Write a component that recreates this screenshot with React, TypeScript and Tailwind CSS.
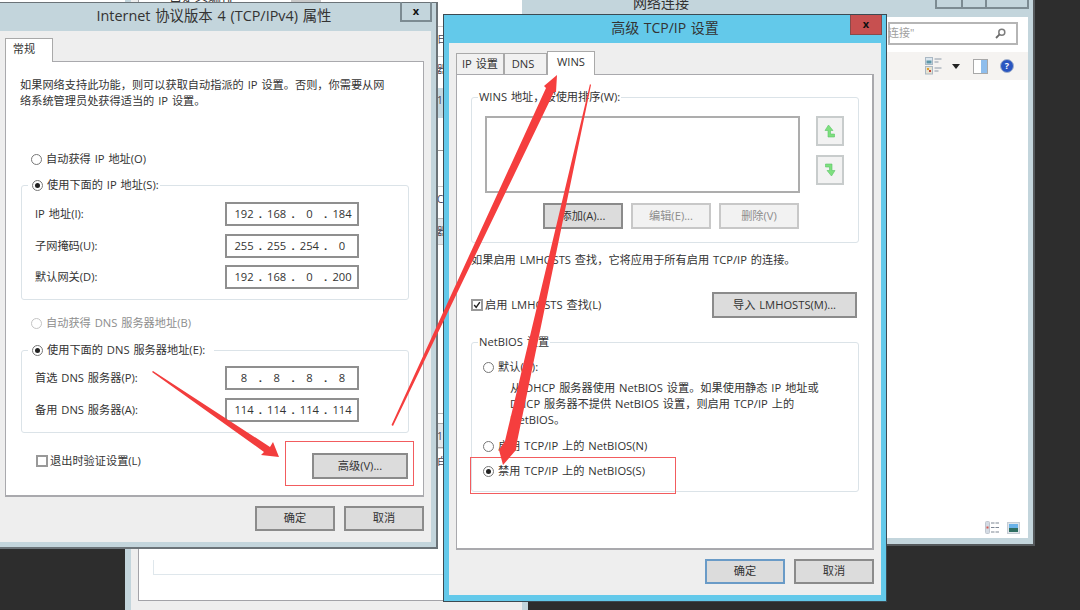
import type { ReactNode } from 'react'

const font = 'font-["Open_Sans","Noto_Sans_CJK_SC",sans-serif]'

// what shows of the list behind, in the gap between the two dialogs
const backRows = [
  { h: 'h-[26px]', bg: 'bg-white', text: '' },
  { h: 'h-[30px]', bg: 'bg-white border-t border-[#ccc]', text: '日' },
  { h: 'h-[32px]', bg: 'bg-white border-t border-[#ccc]', text: '器' },
  { h: 'h-[30px]', bg: 'bg-[#c4d8e0]', text: '1' },
  { h: 'h-[32px]', bg: 'bg-white', text: '' },
  { h: 'h-[36px]', bg: 'bg-white border-t border-[#999]', text: '' },
  { h: 'h-[32px]', bg: 'bg-white border-t border-[#ccc]', text: 'C' },
  { h: 'h-[26px]', bg: 'bg-[#dfe6ea] border-t border-[#bbb]', text: '器' },
  { h: 'h-[169px]', bg: 'bg-white border-t border-[#ccc]', text: '' },
  { h: 'h-[10px]', bg: 'bg-white border-t border-[#bbb]', text: '' },
  { h: 'h-[25px]', bg: 'bg-[#e3e7ea] border-y border-[#aaa]', text: '1' },
  { h: 'h-[40px]', bg: 'bg-white border-t border-[#ddd]', text: '白' },
]

function Btn({ w, h = 'h-[26px]', cls = 'bg-[#dcdcdc] border-[#8b8b8b] text-[#333]', children }: { w: string; h?: string; cls?: string; children: ReactNode }) {
  return <div className={`${w} ${h} ${cls} border-2 flex items-center justify-center shrink-0`}>{children}</div>
}

function Radio({ on, off, children }: { on?: boolean; off?: boolean; children: ReactNode }) {
  return (
    <div className={`flex items-center h-[16px] ${off ? 'text-[#8d8d8d]' : ''}`}>
      <div className={`w-[11px] h-[11px] rounded-full border bg-white mr-[4px] flex items-center justify-center shrink-0 ${off ? 'border-[#c4c4c4]' : 'border-[#777]'}`}>
        {on && <div className="w-[5px] h-[5px] rounded-full bg-[#222]" />}
      </div>
      <span className="whitespace-nowrap">{children}</span>
    </div>
  )
}

function Check({ on, children }: { on?: boolean; children: ReactNode }) {
  return (
    <div className="flex items-center h-[16px]">
      <div className="w-[12px] h-[12px] border-2 border-[#999] bg-white mr-[2px] flex items-center justify-center shrink-0">
        {on && (
          <svg width="10" height="10" viewBox="0 0 10 10">
            <path d="M1.5 5 L4 8 L8.5 1.5" fill="none" stroke="#222" strokeWidth="1.8" />
          </svg>
        )}
      </div>
      <span className="whitespace-nowrap">{children}</span>
    </div>
  )
}

function Group({ legend, cls, children }: { legend: ReactNode; cls: string; children: ReactNode }) {
  return (
    <div className={`relative border border-[#dbe3e8] rounded-[3px] ${cls}`}>
      <div className="absolute left-[6px] -top-[9px] bg-white px-[1px]">{legend}</div>
      {children}
    </div>
  )
}

function IpField({ label, parts }: { label: string; parts: string[] }) {
  return (
    <div className="flex items-center justify-between pl-[13px] pr-[49px] h-[24px]">
      <span className="whitespace-nowrap">{label}</span>
      <div className="w-[134px] h-[24px] border-2 border-[#8f8f8f] bg-white flex items-center pl-[5px]">
        {parts.map((p, i) => (
          <div key={i} className="flex items-center">
            <span className="w-[24px] text-center">{p}</span>
            {i < 3 && <span className="w-[8.7px] text-center font-bold">.</span>}
          </div>
        ))}
      </div>
    </div>
  )
}

function Tab({ active, w, children }: { active?: boolean; w: string; children: ReactNode }) {
  return (
    <div className={`${w} border border-[#a9a9a9] border-b-0 flex justify-center ${active ? 'h-[24px] bg-white pt-[2px] relative z-10 -mb-[1px]' : 'h-[21px] bg-[#f1f1f1] pt-[2px]'}`}>
      {children}
    </div>
  )
}

function UpDown({ down }: { down?: boolean }) {
  return (
    <div className="w-[28px] h-[30px] border-2 border-[#c8cccc] bg-[#f2f2f2] flex items-center justify-center">
      <svg width="12" height="14" viewBox="0 0 12 14" className={down ? '-scale-100' : ''}>
        <path d="M4.5 1 L9 6.5 L6.5 6.5 L6.5 10 L10.5 10 L10.5 13 L4 13 L4 6.5 L1 6.5 Z" fill="#7ee07e" stroke="#5dc46a" strokeWidth="0.6" />
      </svg>
    </div>
  )
}

function BackWindow() {
  return (
    <div className="absolute left-[125px] top-0 w-[403px] h-[610px] bg-[#c3d5dc] px-[6px]">
      <div className="h-full bg-[#eee] pl-[7px]">
        <div className="relative h-[601px] bg-white border-l border-b border-[#a3a3a8] overflow-hidden">
          <div className="absolute left-[30px] -top-[11px] text-[13px] leading-[14px] text-[#333] whitespace-nowrap">自定义编排</div>
          <div className="absolute left-[152px] top-0 w-[30px] h-[2px] bg-[#c9c9c9]" />
          <div className="absolute left-[14px] top-[560px] w-[380px] h-[15px] border-l border-b border-[#dfe7ec]" />
          <div className="absolute left-[298px] top-0 w-[6px] flex flex-col overflow-hidden text-[10px] leading-[24px] text-[#445]">
            {backRows.map((r, i) => (
              <div key={i} className={`${r.h} ${r.bg} overflow-hidden whitespace-nowrap`}>{r.text}</div>
            ))}
          </div>
        </div>
      </div>
    </div>
  )
}

function NetworkWindow() {
  return (
    <div className="absolute left-[289px] -top-[11px] w-[746px] h-[557px] bg-[#c3d5dc] border-r-2 border-b-2 border-[#55595c] flex flex-col text-[#333]">
      <div className="h-[28px] pb-[2px] flex items-center justify-center text-[14px]">网络连接</div>
      <div className="absolute right-[4px] top-0 w-[94px] h-[20px] flex border-2 border-t-0 border-[#7c8b92]">
        <div className="w-[26px] border-r-2 border-[#7c8b92]" />
        <div className="w-[24px] border-r-2 border-[#7c8b92]" />
        <div className="flex-1" />
      </div>
      <div className="flex-1 mr-[5px] mb-[6px] bg-white flex flex-col items-end">
        <div className="h-[35px] flex items-start pt-[5px] justify-end pr-[10px] w-full">
          <div className="w-[130px] h-[23px] border-2 border-[#b5b5b5] flex items-center justify-between pr-[10px] text-[11px] text-[#a0a0a0]">
            <span className="whitespace-nowrap -ml-[2px]">连接"</span>
            <svg width="11" height="11" viewBox="0 0 11 11">
              <circle cx="6.8" cy="4.2" r="3" fill="none" stroke="#7d7d7d" strokeWidth="1.5" />
              <path d="M4.6 6.4 L1 10" stroke="#6a6a6a" strokeWidth="1.8" />
            </svg>
          </div>
        </div>
        <div className="w-[141px] h-[28px] bg-[#f5f3f1] flex items-center pl-[38px]">
          <svg width="17" height="18" viewBox="0 0 17 18">
            <rect x="0.5" y="0.5" width="7" height="7" fill="#dbe6ee" stroke="#aab8c4" />
            <rect x="1.5" y="3.5" width="5" height="3" fill="#5f96a8" />
            <rect x="0.5" y="9.5" width="7" height="7.5" fill="#e6e2d0" stroke="#aab8c4" />
            <rect x="2" y="11" width="2" height="2" fill="#e0a030" />
            <rect x="4" y="13" width="2" height="2" fill="#c0483c" />
            <path d="M9.5 2h7M9.5 5h4M9.5 11h7M9.5 14h4" stroke="#8d9aa8" strokeWidth="1" />
          </svg>
          <svg width="8" height="5" viewBox="0 0 8 5" className="ml-[10px]">
            <path d="M0 0H8L4 5Z" fill="#222" />
          </svg>
          <div className="ml-[13px] w-[15px] h-[15px] border border-[#a8a8a8] bg-white flex justify-end">
            <div className="w-[6px] bg-[#8ebdec]" />
          </div>
          <div className="ml-[12px] w-[14px] h-[14px] rounded-full bg-[#2a56c0] border border-[#a6b4cc] text-white text-[9px] leading-[12px] font-bold text-center">?</div>
        </div>
        <div className="flex-1" />
        <div className="flex items-center pr-[8px] pb-[4px] gap-[7px]">
          <svg width="15" height="13" viewBox="0 0 15 13">
            <rect x="0.500" y="0.500" width="4" height="12" rx="1" fill="#d4dbe4" stroke="#c0c6cf" />
            <path d="M6 2h8M6 6.500h8M6 11h8" stroke="#7e8794" strokeWidth="1.200" strokeDasharray="3.500 1" />
            <rect x="1.500" y="5.500" width="2" height="2" fill="#d6554d" />
          </svg>
          <svg width="13" height="12" viewBox="0 0 13 12">
            <rect x="0.500" y="0.500" width="12" height="11" fill="#dfe5ea" stroke="#c4ccd4" />
            <rect x="2" y="2" width="9" height="4" fill="#69b2e8" />
            <rect x="2" y="6" width="9" height="4" fill="#2f6f62" />
          </svg>
        </div>
      </div>
    </div>
  )
}

function Ipv4Dialog() {
  return (
    <div className="absolute left-0 top-[2px] w-[438px] h-[547px] bg-[#c3d5dc] border-t border-r-2 border-b-2 border-[#6b7378] flex flex-col text-[11.2px] [word-spacing:1px] text-[#333]">
      <div className="h-[28px] pb-[2px] pr-[8px] flex items-center justify-center text-[14.4px]">Internet 协议版本 4 (TCP/IPv4) 属性</div>
      <div className="absolute right-[4px] -top-[1px] w-[32px] h-[20px] border-2 border-t-0 border-[#7c8b92] flex items-center justify-center text-[11px] font-bold text-[#111]">x</div>
      <div className="flex-1 mr-[5px] mb-[5px] bg-[#eee] pl-[5px] pr-[7px] pt-[8px] flex flex-col">
        <div className="flex h-[22px] items-end">
          <Tab active w="w-[48px]"><span className="-ml-[10px]">常规</span></Tab>
        </div>
        <div className="h-[436px] bg-white border border-b-2 border-[#a9a9ad] pt-[15px] leading-[16px]">
          <div className="pl-[14px] whitespace-nowrap">
            如果网络支持此功能，则可以获取自动指派的 IP 设置。否则，你需要从网
            <br />
            络系统管理员处获得适当的 IP 设置。
          </div>
          <div className="mt-[42px] ml-[25px]"><Radio>自动获得 IP 地址(O)</Radio></div>
          <Group cls="mt-[18px] ml-[15px] w-[388px] h-[115px] pt-[16px] flex flex-col gap-[7.5px]" legend={<div className="pl-[3px]"><Radio on>使用下面的 IP 地址(S):</Radio></div>}>
            <IpField label="IP 地址(I):" parts={['192', '168', '0', '184']} />
            <IpField label="子网掩码(U):" parts={['255', '255', '254', '0']} />
            <IpField label="默认网关(D):" parts={['192', '168', '0', '200']} />
          </Group>
          <div className="mt-[15px] ml-[25px]"><Radio off>自动获得 DNS 服务器地址(B)</Radio></div>
          <Group cls="mt-[19px] ml-[15px] w-[388px] h-[83px] pt-[15px] flex flex-col gap-[8px]" legend={<div className="pl-[3px] pr-[8px]"><Radio on>使用下面的 DNS 服务器地址(E):</Radio></div>}>
            <IpField label="首选 DNS 服务器(P):" parts={['8', '8', '8', '8']} />
            <IpField label="备用 DNS 服务器(A):" parts={['114', '114', '114', '114']} />
          </Group>
          <div className="mt-[20px] pl-[30px] pr-[15px] flex justify-between items-start">
            <Check>退出时验证设置(L)</Check>
            <Btn w="w-[96px]">高级(V)...</Btn>
          </div>
        </div>
        <div className="flex-1 flex justify-end items-start gap-[9px] pt-[9px]">
          <Btn w="w-[80px]" h="h-[25px]">确定</Btn>
          <Btn w="w-[80px]" h="h-[25px]">取消</Btn>
        </div>
      </div>
    </div>
  )
}

function TcpIpDialog() {
  return (
    <div className="absolute left-[443px] top-[14px] w-[444px] h-[588px] bg-[#63c9ea] border border-[#3c4a52] flex flex-col text-[11.2px] [word-spacing:1px] text-[#333]">
      <div className="h-[28px] pb-[3px] flex items-center justify-center text-[14px]">高级 TCP/IP 设置</div>
      <div className="absolute right-[4px] top-0 w-[32px] h-[20px] bg-[#c75050] border border-t-0 border-[#8a4a4a] flex items-center justify-center text-[11px] font-bold text-[#111]">x</div>
      <div className="flex-1 mx-[5px] mb-[6px] bg-[#eee] px-[7px] pt-[8px] flex flex-col">
        <div className="flex items-end h-[23px]">
          <Tab w="w-[48px]">IP 设置</Tab>
          <Tab w="w-[43px]"><span className="-ml-[5px]">DNS</span></Tab>
          <Tab active w="w-[48px]">WINS</Tab>
        </div>
        <div className="h-[476px] bg-white border border-r-2 border-b-2 border-[#a9a9ad] leading-[16px]">
          <Group cls="mt-[22px] ml-[14px] w-[388px] h-[146px] pt-[18px] pl-[13px]" legend="WINS 地址，按使用排序(W):">
            <div className="flex gap-[16px]">
              <div className="w-[315px] h-[77px] border-2 border-[#adadad] bg-white" />
              <div className="flex flex-col gap-[9px]">
                <UpDown />
                <UpDown down />
              </div>
            </div>
            <div className="mt-[10px] pl-[58px] flex gap-[8px]">
              <Btn w="w-[80px]">添加(A)...</Btn>
              <Btn w="w-[80px]" cls="bg-[#f2f2f2] border-[#c8c8c8] text-[#8d8d8d]">编辑(E)...</Btn>
              <Btn w="w-[80px]" cls="bg-[#f2f2f2] border-[#c8c8c8] text-[#8d8d8d]">删除(V)</Btn>
            </div>
          </Group>
          <div className="mt-[9px] pl-[14px] whitespace-nowrap">如果启用 LMHOSTS 查找，它将应用于所有启用 TCP/IP 的连接。</div>
          <div className="mt-[24px] pl-[14px] pr-[15px] flex items-center justify-between">
            <Check on>启用 LMHOSTS 查找(L)</Check>
            <Btn w="w-[145px]">导入 LMHOSTS(M)...</Btn>
          </div>
          <Group cls="mt-[24px] ml-[14px] w-[388px] h-[150px] pt-[16px] pl-[11px]" legend="NetBIOS 设置">
            <Radio>默认(U):</Radio>
            <div className="mt-[5px] ml-[27px] whitespace-nowrap">
              从 DHCP 服务器使用 NetBIOS 设置。如果使用静态 IP 地址或
              <br />
              DHCP 服务器不提供 NetBIOS 设置，则启用 TCP/IP 上的
              <br />
              NetBIOS。
            </div>
            <div className="mt-[10px]"><Radio>启用 TCP/IP 上的 NetBIOS(N)</Radio></div>
            <div className="mt-[9px]"><Radio on>禁用 TCP/IP 上的 NetBIOS(S)</Radio></div>
          </Group>
        </div>
        <div className="flex-1 flex justify-end items-start gap-[9px] pt-[9px]">
          <Btn w="w-[80px]" h="h-[25px]" cls="bg-[#dcdcdc] border-[#6a9bc7] text-[#333]">确定</Btn>
          <Btn w="w-[80px]" h="h-[25px]">取消</Btn>
        </div>
      </div>
    </div>
  )
}

export default function App() {
  return (
    <div className={`relative w-[1080px] h-[610px] overflow-hidden bg-[#2d2d2d] ${font}`}>
      <div className="absolute left-0 top-0 w-[125px] h-[2px] bg-white" />
      <NetworkWindow />
      <BackWindow />
      <Ipv4Dialog />
      <TcpIpDialog />

      {/* annotations drawn over the screenshot */}
      <div className="absolute left-[285px] top-[441px] w-[129px] h-[45px] border border-[#f25c5e]" />
      <div className="absolute left-[470px] top-[457px] w-[206px] h-[37px] border border-[#f25c5e]" />
      <svg className="absolute left-0 top-0" width="1080" height="610" viewBox="0 0 1080 610">
        <polygon points="152,372 153,371 270,447 273,442 279,457 261,455 264,452" fill="#f23d3d" />
        <polygon points="391.500,425 393,426 554,92 556,92 557,75 544,86 546,88" fill="#f53e3e" />
        <polygon points="590,84 591,85 517,442 516,450 503,465 499,450 505,441" fill="#f53e3e" />
      </svg>
    </div>
  )
}
